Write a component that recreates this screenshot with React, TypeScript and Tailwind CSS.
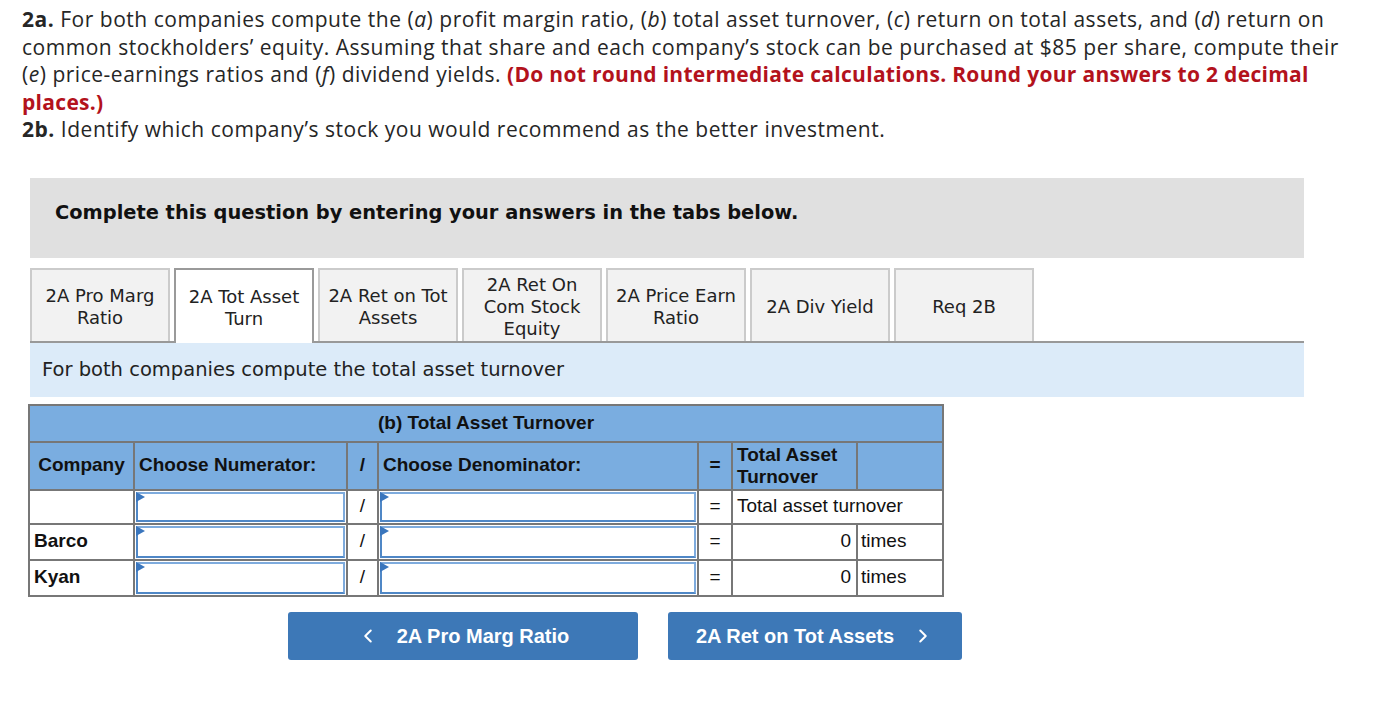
import { ChevronLeft, ChevronRight } from 'lucide-react';

const tabs = [
  { label: '2A Pro Marg Ratio', lines: ['2A Pro Marg', 'Ratio'] },
  { label: '2A Tot Asset Turn', lines: ['2A Tot Asset', 'Turn'], active: true },
  { label: '2A Ret on Tot Assets', lines: ['2A Ret on Tot', 'Assets'] },
  { label: '2A Ret On Com Stock Equity', lines: ['2A Ret On', 'Com Stock', 'Equity'] },
  { label: '2A Price Earn Ratio', lines: ['2A Price Earn', 'Ratio'] },
  { label: '2A Div Yield', lines: ['2A Div Yield'] },
  { label: 'Req 2B', lines: ['Req 2B'] },
];

const rows = [
  { company: '', result: null },
  { company: 'Barco', result: '0' },
  { company: 'Kyan', result: '0' },
];

// Answer box with the little blue flag in the corner
function AnswerInput() {
  return (
    <div className="relative h-full border-2 border-[#7eabdd] border-l-[#4f87c6] border-b-[#4f87c6] bg-white">
      <svg className="absolute -left-[2px] -top-[2px] w-[9px] h-[11px]" viewBox="0 0 9 11">
        <polygon points="0,0 9,5 0,10" fill="#3a76bd" />
      </svg>
    </div>
  );
}

export default function App() {
  const verdana = { fontFamily: '"DejaVu Sans", Verdana, sans-serif' };
  const arial = { fontFamily: '"Liberation Sans", Arial, sans-serif' };

  return (
    <div className="bg-white min-h-[708px] pl-[22px] pt-[6px] text-[#222]">
      {/* Question text */}
      <p
        className="text-[21px] leading-[27.5px] tracking-[0.52px] text-[#262626] whitespace-nowrap"
        style={{ fontFamily: '"Open Sans", Lato, sans-serif' }}
      >
        <b>2a.</b> For both companies compute the (<i>a</i>) profit margin ratio, (<i>b</i>) total asset turnover, (<i>c</i>) return on total assets, and (<i>d</i>) return on
        <br />
        common stockholders’ equity. Assuming that share and each company’s stock can be purchased at $85 per share, compute their
        <br />
        (<i>e</i>) price-earnings ratios and (<i>f</i>) dividend yields.{' '}
        <b className="text-[#b3121c] tracking-[0.3px]">(Do not round intermediate calculations. Round your answers to 2 decimal</b>
        <br />
        <b className="text-[#b3121c] tracking-[0.3px]">places.)</b>
        <br />
        <b>2b.</b> Identify which company’s stock you would recommend as the better investment.
      </p>

      <div className="ml-[8px] mt-[34px] w-[1274px]">
        <div className="h-[80px] bg-[#e0e0e0] pl-[25px] pt-[20px]" style={verdana}>
          <span className="text-[19.4px] font-bold text-[#111]">Complete this question by entering your answers in the tabs below.</span>
        </div>

        {/* Tabs */}
        <div className="mt-[10px] flex items-end gap-[4px] border-b-2 border-[#999]" style={verdana}>
          {tabs.map((t) =>
            t.active ? (
              <div
                key={t.label}
                className="w-[140px] h-[75px] -mb-[2px] bg-white border-2 border-b-0 border-[#9a9a9a] flex flex-col items-center justify-center pt-[3px] text-[18px] leading-[22px] text-[#222]"
              >
                {t.lines.map((l) => (
                  <span key={l}>{l}</span>
                ))}
              </div>
            ) : (
              <div
                key={t.label}
                className="w-[140px] h-[73px] bg-[#f2f2f2] border-2 border-b-0 border-[#cbcbcb] flex flex-col items-center justify-center pt-[4px] text-[18px] leading-[22px] text-[#222]"
              >
                {t.lines.map((l) => (
                  <span key={l}>{l}</span>
                ))}
              </div>
            ),
          )}
        </div>

        <div className="h-[54px] bg-[#dcebf9] flex items-center pl-[12px]" style={verdana}>
          <span className="text-[19.5px] text-[#222]">For both companies compute the total asset turnover</span>
        </div>
      </div>

      {/* Answer table */}
      <table className="ml-[6px] mt-[7px] w-[914px] table-fixed border-collapse text-[19px] text-[#111]" style={arial}>
        <colgroup>
          <col className="w-[105px]" />
          <col className="w-[213px]" />
          <col className="w-[31px]" />
          <col className="w-[320px]" />
          <col className="w-[34px]" />
          <col className="w-[125px]" />
          <col className="w-[86px]" />
        </colgroup>
        <thead>
          <tr className="h-[37px] bg-[#7aade0]">
            <th colSpan={7} className="border-2 border-[#777] font-bold text-center">
              (b) Total Asset Turnover
            </th>
          </tr>
          <tr className="h-[48px] bg-[#7aade0] font-bold">
            <th className="border-2 border-[#777] text-center px-[2px]">Company</th>
            <th className="border-2 border-[#777] text-left pl-[4px]">Choose Numerator:</th>
            <th className="border-2 border-[#777] text-center">/</th>
            <th className="border-2 border-[#777] text-left pl-[4px]">Choose Denominator:</th>
            <th className="border-2 border-[#777] text-center">=</th>
            <th className="border-2 border-[#777] text-left pl-[4px] leading-[22px]">
              Total Asset
              <br />
              Turnover
            </th>
            <th className="border-2 border-[#777]"></th>
          </tr>
        </thead>
        <tbody>
          {rows.map((r, i) => (
            <tr key={i} className={i === 0 ? 'h-[34px]' : 'h-[36px]'}>
              <td className="border-2 border-[#777] pl-[4px] font-bold">{r.company}</td>
              <td className="border-2 border-[#777] p-[1px]">
                <div className={i === 0 ? 'h-[30px]' : 'h-[32px]'}>
                  <AnswerInput />
                </div>
              </td>
              <td className="border-2 border-[#777] text-center">/</td>
              <td className="border-2 border-[#777] p-[1px]">
                <div className={i === 0 ? 'h-[30px]' : 'h-[32px]'}>
                  <AnswerInput />
                </div>
              </td>
              <td className="border-2 border-[#777] text-center">=</td>
              {r.result === null ? (
                <td colSpan={2} className="border-2 border-[#777] pl-[4px] whitespace-nowrap">
                  Total asset turnover
                </td>
              ) : (
                <>
                  <td className="border-2 border-[#777] text-right pr-[5px]">{r.result}</td>
                  <td className="border-2 border-[#777] pl-[3px]">times</td>
                </>
              )}
            </tr>
          ))}
        </tbody>
      </table>

      {/* Prev / next buttons */}
      <div className="ml-[266px] mt-[15px] flex gap-[30px]" style={arial}>
        <button className="w-[350px] h-[48px] rounded-[3px] bg-[#3d78b7] text-white flex items-center justify-center gap-[18px] text-[20px] font-bold">
          <ChevronLeft className="w-[22px] h-[22px]" strokeWidth={2.2} />
          <span>2A Pro Marg Ratio</span>
        </button>
        <button className="w-[294px] h-[48px] rounded-[3px] bg-[#3d78b7] text-white flex items-center justify-center gap-[18px] text-[20px] font-bold">
          <span>2A Ret on Tot Assets</span>
          <ChevronRight className="w-[22px] h-[22px]" strokeWidth={2.2} />
        </button>
      </div>
    </div>
  );
}
